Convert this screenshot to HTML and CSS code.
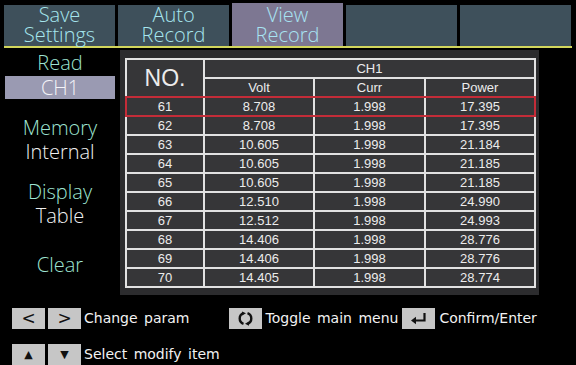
FILE: index.html
```html
<!DOCTYPE html>
<html>
<head>
<meta charset="utf-8">
<link rel="stylesheet" href="styles.css">
</head>
<body>
<div class="screen">
  <div class="tabs">
    <div class="tab">Save<br>Settings</div>
    <div class="tab">Auto<br>Record</div>
    <div class="tab active">View<br>Record</div>
    <div class="tab"></div>
    <div class="tab"></div>
  </div>
  <div class="main">
    <div class="side">
      <div class="lbl read">Read</div>
      <div class="val chosen">CH1</div>
      <div class="lbl memory">Memory</div>
      <div class="val">Internal</div>
      <div class="lbl display">Display</div>
      <div class="val">Table</div>
      <div class="lbl clear">Clear</div>
    </div>
    <div class="panel">
      <div class="tbl">
        <div class="thead">
          <div class="c no">NO.</div>
          <div class="c ch">CH1</div>
          <div class="c">Volt</div>
          <div class="c">Curr</div>
          <div class="c">Power</div>
        </div>
        <div class="row sel"><div class="c">61</div><div class="c">8.708</div><div class="c">1.998</div><div class="c">17.395</div></div>
        <div class="row"><div class="c">62</div><div class="c">8.708</div><div class="c">1.998</div><div class="c">17.395</div></div>
        <div class="row"><div class="c">63</div><div class="c">10.605</div><div class="c">1.998</div><div class="c">21.184</div></div>
        <div class="row"><div class="c">64</div><div class="c">10.605</div><div class="c">1.998</div><div class="c">21.185</div></div>
        <div class="row"><div class="c">65</div><div class="c">10.605</div><div class="c">1.998</div><div class="c">21.185</div></div>
        <div class="row"><div class="c">66</div><div class="c">12.510</div><div class="c">1.998</div><div class="c">24.990</div></div>
        <div class="row"><div class="c">67</div><div class="c">12.512</div><div class="c">1.998</div><div class="c">24.993</div></div>
        <div class="row"><div class="c">68</div><div class="c">14.406</div><div class="c">1.998</div><div class="c">28.776</div></div>
        <div class="row"><div class="c">69</div><div class="c">14.406</div><div class="c">1.998</div><div class="c">28.776</div></div>
        <div class="row"><div class="c">70</div><div class="c">14.405</div><div class="c">1.998</div><div class="c">28.774</div></div>
      </div>
    </div>
  </div>
  <div class="footer">
    <div class="frow">
      <span class="key">&lt;</span><span class="key">&gt;</span><span class="txt">Change param</span>
      <span class="key ico toggle"><svg width="33" height="21" viewBox="0 0 33 21"><path d="M14.5 5.2 A5.6 5.6 0 0 0 14.5 15.8" fill="none" stroke="#111" stroke-width="2.4"/><path d="M18.5 15.8 A5.6 5.6 0 0 0 18.5 5.2" fill="none" stroke="#111" stroke-width="2.4"/><polygon points="13,3.4 17,5.2 13,7.4" fill="#111"/><polygon points="20,13.6 16,15.8 20,17.8" fill="#111"/></svg></span><span class="txt">Toggle main menu</span>
      <span class="key ico enter"><svg width="33" height="21" viewBox="0 0 33 21"><path d="M22.5 5 V12.5 H13" fill="none" stroke="#111" stroke-width="2.2"/><polygon points="9,12.5 14,8.8 14,16.2" fill="#111"/></svg></span><span class="txt">Confirm/Enter</span>
    </div>
    <div class="frow">
      <span class="key small">&#9650;</span><span class="key small">&#9660;</span><span class="txt">Select modify item</span>
    </div>
  </div>
</div>
</body>
</html>
```

FILE: styles.css
```css
* { box-sizing: border-box; }
html, body { margin: 0; padding: 0; background: #000; }
body { width: 576px; height: 365px; overflow: hidden; }

.screen { width: 576px; height: 365px; background: #000; }

.tabs {
  display: flex;
  align-items: flex-end;
  gap: 3px;
  height: 48px;
  margin: 0 4px 0 4px;
  border-bottom: 2px solid #d2d65c;
}
.tab {
  width: 111px;
  height: 41px;
  background: #3e505b;
  color: #a6e6ee;
  font-family: "Open Sans", "Noto Sans", sans-serif;
  font-weight: 300;
  font-size: 20px;
  line-height: 20px;
  text-align: center;
}
.tab.active {
  height: 43px;
  padding-top: 2px;
  background: #7d7792;
  color: #a8e4f2;
}

.main { display: flex; height: 247px; }

.side {
  width: 120px;
  display: flex;
  flex-direction: column;
  align-items: center;
  padding-top: 4px;
  font-family: "Open Sans", "Noto Sans", sans-serif;
  font-weight: 300;
  font-size: 20px;
  line-height: 24px;
}
.lbl { color: #9ee4d2; }
.val { color: #f0f0f0; }
.read { line-height: 22px; }
.chosen {
  align-self: stretch;
  margin: 2px 5px 0 5px;
  height: 23px;
  line-height: 23px;
  text-align: center;
  background: #9a9ab2;
  color: #f4f4f8;
}
.memory { margin-top: 17px; }
.display { margin-top: 16px; }
.clear { margin-top: 25px; }

.panel {
  width: 419px;
  height: 245px;
  margin-top: 2px;
  background: #2c2c2e;
  padding: 8px 0 0 5px;
}
.tbl {
  display: inline-flex;
  flex-direction: column;
  gap: 2px;
  padding: 2px;
  background: #e2e2e2;
}
.thead, .row {
  display: grid;
  grid-template-columns: 76px 108px 109px 108px;
  gap: 2px;
}
.thead { grid-template-rows: 17px 17px; }
.row { height: 17px; }
.c {
  background: #363638;
  color: #ececec;
  font-family: "Liberation Sans", Arial, sans-serif;
  font-size: 13px;
  line-height: 17px;
  text-align: center;
}
.no {
  grid-row: 1 / 3;
  grid-column: 1;
  font-size: 23px;
  line-height: 36px;
}
.ch { grid-column: 2 / 5; }
.row.sel { outline: 2px solid #c42c38; }

.footer {
  padding: 13px 0 0 12px;
  display: flex;
  flex-direction: column;
  gap: 15px;
}
.frow { display: flex; align-items: center; height: 21px; }
.key {
  width: 33px;
  height: 21px;
  background: #c6c6c6;
  color: #111;
  font-family: "DejaVu Sans", sans-serif;
  font-size: 17px;
  line-height: 21px;
  text-align: center;
  margin-right: 3px;
}
.key.small { font-size: 11px; }
.key.ico { display: flex; }
.toggle { margin-left: 39px; }
.enter { margin-left: 4px; }
.txt {
  color: #f2f2f2;
  font-family: "DejaVu Sans", sans-serif;
  font-size: 14px;
  line-height: 21px;
  word-spacing: 2px;
}
.ico + .txt { margin-left: 1px; }
```
